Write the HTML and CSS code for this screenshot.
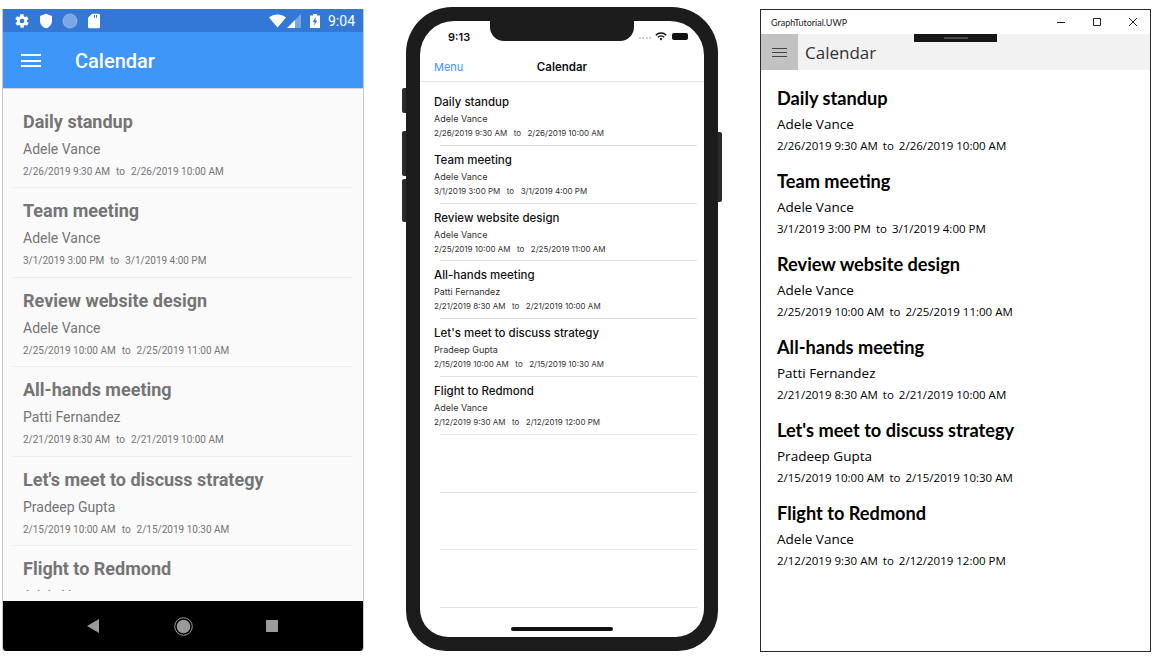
FILE: index.html
```html
<!DOCTYPE html>
<html lang="en">
<head>
    <meta charset="UTF-8">
    <meta name="viewport" content="width=device-width, initial-scale=1.0">
    <title>Calendar</title>
    <link rel="stylesheet" href="styles.css">
</head>
<body>
    <div class="stage">
        <!-- android -->
        <div class="android">
            <div class="a-status">
                <svg class="a-ico" width="16" height="16" viewBox="0 0 24 24"><path fill="#fff" d="M19.4 13c0-.3.1-.6.1-1s0-.7-.1-1l2.100-1.600c.2-.2.2-.4.1-.6l-2-3.500c-.1-.2-.4-.3-.6-.2l-2.500 1c-.5-.4-1.100-.7-1.700-1l-.4-2.700c0-.2-.2-.4-.5-.4h-4c-.3 0-.5.2-.5.400l-.4 2.700c-.6.3-1.200.6-1.700 1l-2.500-1c-.2-.1-.5 0-.6.2l-2 3.500c-.1.200-.1.500.1.600L4.600 11c0 .3-.1.700-.1 1s0 .7.1 1l-2.100 1.600c-.2.200-.2.400-.1.600l2 3.500c.1.200.4.300.6.200l2.500-1c.5.400 1.100.7 1.700 1l.4 2.700c0 .2.2.4.5.4h4c.3 0 .5-.2.5-.4l.4-2.700c.6-.3 1.200-.6 1.700-1l2.500 1c.2.100.5 0 .6-.2l2-3.500c.1-.2.1-.5-.1-.6zM12 15.500a3.500 3.500 0 1 1 0-7 3.500 3.500 0 0 1 0 7z"/></svg>
                <svg class="a-ico" width="16" height="16" viewBox="0 0 24 24"><path fill="#fff" d="M12 1 3 4.500v7c0 5.500 3.800 9.800 9 11.500 5.200-1.700 9-6 9-11.500v-7z"/></svg>
                <svg class="a-ico" width="16" height="16" viewBox="0 0 24 24"><circle cx="12" cy="12" r="10.500" fill="#7ba6e6" stroke="#a9c6ef" stroke-width="1"/></svg>
                <svg class="a-ico" width="16" height="16" viewBox="0 0 24 24"><path fill="#fff" d="M9 1h10a2 2 0 0 1 2 2v18a2 2 0 0 1-2 2H5a2 2 0 0 1-2-2V7zM12 3v4h1.500V3zm3 0v4h1.500V3z"/></svg>
                <span class="spacer"></span>
                <svg width="17" height="14" viewBox="0 0 17 14"><path fill="#fff" d="M0 3.500C2.300 1.500 5.200.5 8.500.5s6.200 1 8.500 3l-8.500 10z"/></svg>
                <svg class="a-signal" width="14" height="14" viewBox="0 0 14 14"><path fill="#7ba6e6" d="M14 0v14H8V6z"/><path fill="#fff" d="M8 6v8H0z"/></svg>
                <svg class="a-batt" width="10" height="14" viewBox="0 0 10 14"><path fill="#fff" d="M3 0h4v1.500h3V14H0V1.500h3z"/><path fill="#3278d4" d="M5.800 3 2.800 8h1.800l-.4 3.500 3-5H5.400z"/></svg>
                <span class="a-time">9:04</span>
            </div>
            <div class="a-bar">
                <div class="a-burger"><i></i><i></i><i></i></div>
                <span class="a-title">Calendar</span>
            </div>
            <div class="a-list">
                <div class="a-item">
                    <div class="a-subject">Daily standup</div>
                    <div class="a-name">Adele Vance</div>
                    <div class="a-date"><span>2/26/2019 9:30 AM</span><span>to</span><span>2/26/2019 10:00 AM</span></div>
                </div>
                <div class="a-item">
                    <div class="a-subject">Team meeting</div>
                    <div class="a-name">Adele Vance</div>
                    <div class="a-date"><span>3/1/2019 3:00 PM</span><span>to</span><span>3/1/2019 4:00 PM</span></div>
                </div>
                <div class="a-item">
                    <div class="a-subject">Review website design</div>
                    <div class="a-name">Adele Vance</div>
                    <div class="a-date"><span>2/25/2019 10:00 AM</span><span>to</span><span>2/25/2019 11:00 AM</span></div>
                </div>
                <div class="a-item">
                    <div class="a-subject">All-hands meeting</div>
                    <div class="a-name">Patti Fernandez</div>
                    <div class="a-date"><span>2/21/2019 8:30 AM</span><span>to</span><span>2/21/2019 10:00 AM</span></div>
                </div>
                <div class="a-item">
                    <div class="a-subject">Let's meet to discuss strategy</div>
                    <div class="a-name">Pradeep Gupta</div>
                    <div class="a-date"><span>2/15/2019 10:00 AM</span><span>to</span><span>2/15/2019 10:30 AM</span></div>
                </div>
                <div class="a-item">
                    <div class="a-subject">Flight to Redmond</div>
                    <div class="a-name a-name-cut">Adele Vance</div>
                </div>
            </div>
            <div class="a-nav">
                <svg width="12" height="14" viewBox="0 0 12 14"><path fill="#9a9a9a" d="M12 0v14L0 7z"/></svg>
                <svg width="19" height="19" viewBox="0 0 19 19"><circle cx="9.500" cy="9.500" r="8.800" fill="none" stroke="#9a9a9a" stroke-width="1"/><circle cx="9.500" cy="9.500" r="6.800" fill="#9a9a9a"/></svg>
                <div class="a-square"></div>
            </div>
        </div>

        <!-- iphone -->
        <div class="iphone">
            <div class="side side-mute"></div>
            <div class="side side-up"></div>
            <div class="side side-down"></div>
            <div class="side side-power"></div>
            <div class="i-screen">
                <div class="notch"></div>
                <div class="i-status">
                    <span class="i-time">9:13</span>
                    <span class="spacer"></span>
                    <span class="i-dots"><i></i><i></i><i></i><i></i></span>
                    <svg width="12" height="9" viewBox="0 0 12 9"><path fill="none" stroke="#111" stroke-width="1.500" d="M.8 3.200a7.500 7.500 0 0 1 10.400 0M2.800 5.200a4.600 4.600 0 0 1 6.400 0"/><path fill="#111" d="M4.500 6.800a2.200 2.200 0 0 1 3 0L6 8.600z"/></svg>
                    <div class="i-batt"></div>
                </div>
                <div class="i-nav">
                    <span class="i-menu">Menu</span>
                    <span class="i-navtitle">Calendar</span>
                </div>
                <div class="i-list">
                    <div class="i-item">
                        <div class="i-subject">Daily standup</div>
                        <div class="i-name">Adele Vance</div>
                        <div class="i-date"><span>2/26/2019 9:30 AM</span><span>to</span><span>2/26/2019 10:00 AM</span></div>
                    </div>
                    <div class="i-item">
                        <div class="i-subject">Team meeting</div>
                        <div class="i-name">Adele Vance</div>
                        <div class="i-date"><span>3/1/2019 3:00 PM</span><span>to</span><span>3/1/2019 4:00 PM</span></div>
                    </div>
                    <div class="i-item">
                        <div class="i-subject">Review website design</div>
                        <div class="i-name">Adele Vance</div>
                        <div class="i-date"><span>2/25/2019 10:00 AM</span><span>to</span><span>2/25/2019 11:00 AM</span></div>
                    </div>
                    <div class="i-item">
                        <div class="i-subject">All-hands meeting</div>
                        <div class="i-name">Patti Fernandez</div>
                        <div class="i-date"><span>2/21/2019 8:30 AM</span><span>to</span><span>2/21/2019 10:00 AM</span></div>
                    </div>
                    <div class="i-item">
                        <div class="i-subject">Let's meet to discuss strategy</div>
                        <div class="i-name">Pradeep Gupta</div>
                        <div class="i-date"><span>2/15/2019 10:00 AM</span><span>to</span><span>2/15/2019 10:30 AM</span></div>
                    </div>
                    <div class="i-item">
                        <div class="i-subject">Flight to Redmond</div>
                        <div class="i-name">Adele Vance</div>
                        <div class="i-date"><span>2/12/2019 9:30 AM</span><span>to</span><span>2/12/2019 12:00 PM</span></div>
                    </div>
                    <div class="i-item"></div>
                    <div class="i-item"></div>
                    <div class="i-item"></div>
                </div>
                <div class="home-bar"></div>
            </div>
        </div>

        <!-- windows -->
        <div class="uwp">
            <div class="w-title">
                <span class="w-app">GraphTutorial.UWP</span>
                <span class="spacer"></span>
                <svg class="w-ctl" width="10" height="10" viewBox="0 0 10 10"><path stroke="#222" d="M1 5.500h8"/></svg>
                <svg class="w-ctl" width="10" height="10" viewBox="0 0 10 10"><path fill="none" stroke="#222" d="M1.500 1.500h7v7h-7z"/></svg>
                <svg class="w-ctl" width="10" height="10" viewBox="0 0 10 10"><path fill="none" stroke="#222" d="m1 1 8 8M9 1l-8 8"/></svg>
            </div>
            <div class="w-bar">
                <div class="w-burger"><div class="w-lines"><i></i><i></i><i></i></div></div>
                <span class="w-heading">Calendar</span>
                <div class="debug"><i></i></div>
            </div>
            <div class="w-list">
                <div class="w-item">
                    <div class="w-subject">Daily standup</div>
                    <div class="w-name">Adele Vance</div>
                    <div class="w-date"><span>2/26/2019 9:30 AM</span><span>to</span><span>2/26/2019 10:00 AM</span></div>
                </div>
                <div class="w-item">
                    <div class="w-subject">Team meeting</div>
                    <div class="w-name">Adele Vance</div>
                    <div class="w-date"><span>3/1/2019 3:00 PM</span><span>to</span><span>3/1/2019 4:00 PM</span></div>
                </div>
                <div class="w-item">
                    <div class="w-subject">Review website design</div>
                    <div class="w-name">Adele Vance</div>
                    <div class="w-date"><span>2/25/2019 10:00 AM</span><span>to</span><span>2/25/2019 11:00 AM</span></div>
                </div>
                <div class="w-item">
                    <div class="w-subject">All-hands meeting</div>
                    <div class="w-name">Patti Fernandez</div>
                    <div class="w-date"><span>2/21/2019 8:30 AM</span><span>to</span><span>2/21/2019 10:00 AM</span></div>
                </div>
                <div class="w-item">
                    <div class="w-subject">Let's meet to discuss strategy</div>
                    <div class="w-name">Pradeep Gupta</div>
                    <div class="w-date"><span>2/15/2019 10:00 AM</span><span>to</span><span>2/15/2019 10:30 AM</span></div>
                </div>
                <div class="w-item">
                    <div class="w-subject">Flight to Redmond</div>
                    <div class="w-name">Adele Vance</div>
                    <div class="w-date"><span>2/12/2019 9:30 AM</span><span>to</span><span>2/12/2019 12:00 PM</span></div>
                </div>
            </div>
        </div>
    </div>
</body>
</html>
```

FILE: styles.css
```css
html, body {
    margin: 0;
    padding: 0;
    background-color: white;
    overflow: hidden;
}
.stage {
    display: flex;
    align-items: flex-start;
    width: 1155px;
    height: 660px;
    box-sizing: border-box;
    padding: 7px 0 0 2px;
}
.spacer {
    flex: 1;
}

/* android */
.android {
    width: 362px;
    height: 642px;
    margin-top: 2px;
    flex: none;
    display: flex;
    flex-direction: column;
    box-sizing: border-box;
    border-left: 1px solid #c8c8c8;
    border-right: 1px solid #c8c8c8;
    border-radius: 0 0 4px 4px;
    overflow: hidden;
    background-color: #fafafa;
    font-family: Roboto, sans-serif;
}
.a-status {
    height: 23px;
    flex: none;
    display: flex;
    align-items: center;
    padding: 1px 8px 0 11px;
    box-sizing: border-box;
    background-color: #3278d4;
    color: white;
}
.a-ico {
    margin-right: 8px;
}
.a-signal {
    margin-left: 1px;
}
.a-batt {
    margin-left: 9px;
}
.a-time {
    margin-left: 8px;
    font-size: 14px;
}
.a-bar {
    height: 57px;
    flex: none;
    display: flex;
    align-items: center;
    padding-top: 1px;
    background-color: #3e96f8;
    border-bottom: 1px solid #d4d4d4;
    box-sizing: border-box;
    color: white;
}
.a-burger {
    width: 20px;
    margin-left: 18px;
    margin-right: 34px;
}
.a-burger i {
    display: block;
    height: 2px;
    margin: 3.500px 0;
    background-color: white;
}
.a-title {
    font-size: 20px;
    font-weight: 500;
}
.a-list {
    flex: 1;
    min-height: 0;
    overflow: hidden;
    padding: 10px 10px 0 10px;
}
.a-item {
    height: 89.400px;
    box-sizing: border-box;
    padding: 11px 0 0 10px;
    border-bottom: 1px solid #ececec;
    color: #757575;
}
.a-subject {
    font-size: 18px;
    line-height: 24px;
    font-weight: 700;
}
.a-name {
    margin-top: 5px;
    font-size: 14px;
    line-height: 20px;
}
.a-name-cut {
    height: 5px;
    overflow: hidden;
}
.a-date {
    margin-top: 5px;
    font-size: 10px;
    line-height: 15px;
}
.a-date span + span {
    margin-left: 6px;
}
.a-nav {
    height: 50px;
    flex: none;
    display: flex;
    align-items: center;
    padding-left: 84px;
    gap: 74.500px;
    background-color: black;
}
.a-square {
    width: 12px;
    height: 12px;
    margin-left: -1px;
    background-color: #9a9a9a;
}

/* iphone */
.iphone {
    position: relative;
    width: 312px;
    height: 644px;
    margin-left: 42px;
    flex: none;
    box-sizing: border-box;
    padding: 14px;
    background-color: #1c1c1c;
    border-radius: 46px 46px 40px 40px;
    font-family: Inter, sans-serif;
}
.side {
    position: absolute;
    width: 4px;
    background-color: #2a2a2a;
}
.side-mute {
    left: -4px;
    top: 81px;
    height: 25px;
    border-radius: 2px 0 0 2px;
}
.side-up {
    left: -4px;
    top: 124px;
    height: 45px;
    border-radius: 2px 0 0 2px;
}
.side-down {
    left: -4px;
    top: 172px;
    height: 43px;
    border-radius: 2px 0 0 2px;
}
.side-power {
    right: -4px;
    top: 125px;
    height: 70px;
    border-radius: 0 2px 2px 0;
}
.i-screen {
    position: relative;
    height: 100%;
    background-color: white;
    border-radius: 34px 34px 28px 28px;
    overflow: hidden;
}
.notch {
    position: absolute;
    left: 70px;
    top: 0;
    width: 144px;
    height: 20px;
    background-color: #1c1c1c;
    border-radius: 0 0 14px 14px;
}
.i-status {
    height: 30px;
    display: flex;
    align-items: center;
    padding: 1px 16px 0 28px;
    box-sizing: border-box;
}
.i-time {
    font-size: 11px;
    font-weight: 600;
    color: #111;
}
.i-dots {
    display: flex;
    gap: 1.500px;
    margin-right: 4px;
    margin-top: 2px;
}
.i-dots i {
    width: 2px;
    height: 2px;
    border-radius: 50%;
    background-color: #c4c4c4;
}
.i-batt {
    width: 16px;
    height: 7px;
    margin-left: 5px;
    background-color: #111;
    border-radius: 2px;
}
.i-nav {
    position: relative;
    height: 31px;
    display: flex;
    align-items: center;
    justify-content: center;
    padding-top: 1px;
    box-sizing: border-box;
    border-bottom: 1px solid #e6e6e6;
}
.i-menu {
    position: absolute;
    left: 14px;
    font-size: 11px;
    color: #3f93f5;
}
.i-navtitle {
    font-size: 11.500px;
    font-weight: 600;
    color: #111;
}
.i-list {
    display: flex;
    flex-direction: column;
    padding-top: 6px;
}
.i-item {
    height: 57.800px;
    flex: none;
    box-sizing: border-box;
    padding: 6px 0 0 14px;
    position: relative;
    color: #111;
}
.i-item::after {
    content: "";
    position: absolute;
    left: 20px;
    right: 7px;
    bottom: 0;
    height: 1px;
    background-color: #e2e2e2;
}
.i-subject {
    font-size: 11.500px;
    line-height: 16px;
    font-weight: 500;
}
.i-name {
    margin-top: 2px;
    font-size: 9px;
    line-height: 13px;
    color: #333;
}
.i-date {
    margin-top: 2px;
    font-size: 8px;
    line-height: 12px;
    color: #333;
}
.i-date span + span {
    margin-left: 6.500px;
}
.home-bar {
    position: absolute;
    left: 91px;
    bottom: 6px;
    width: 102px;
    height: 4px;
    background-color: #111;
    border-radius: 2px;
}

/* windows */
.uwp {
    width: 391px;
    height: 643px;
    margin-top: 2px;
    margin-left: 42px;
    flex: none;
    box-sizing: border-box;
    border: 1px solid #2a2a2a;
    background-color: white;
    font-family: "Open Sans", sans-serif;
    color: black;
}
.w-title {
    height: 24px;
    display: flex;
    align-items: center;
    padding: 0 12px 0 10px;
}
.w-app {
    font-family: Lato, sans-serif;
    font-size: 9px;
    color: #222;
}
.w-ctl {
    margin-left: 26px;
}
.w-bar {
    position: relative;
    height: 36px;
    display: flex;
    align-items: center;
    background-color: #f2f2f2;
}
.w-burger {
    width: 37px;
    height: 36px;
    display: flex;
    align-items: center;
    justify-content: center;
    background-color: #c2c2c2;
}
.w-lines {
    width: 15px;
}
.w-lines i {
    display: block;
    height: 1px;
    margin: 3px 0;
    background-color: #444;
}
.w-heading {
    margin-left: 7px;
    padding-top: 1px;
    font-size: 17px;
    color: #333;
}
.debug {
    position: absolute;
    left: 153px;
    top: 0;
    width: 83px;
    height: 8px;
    display: flex;
    justify-content: center;
    background-color: #161616;
}
.debug i {
    width: 24px;
    height: 2px;
    margin-top: 3px;
    background-color: #4a4a4a;
}
.w-list {
    padding: 16px 0 0 16px;
}
.w-item {
    height: 83px;
}
.w-subject {
    font-family: Lato, sans-serif;
    font-size: 18.200px;
    line-height: 25px;
    font-weight: 700;
}
.w-name {
    margin-top: 1px;
    font-size: 13.500px;
    line-height: 25px;
}
.w-date {
    margin-top: -1px;
    font-size: 11.500px;
    line-height: 19px;
}
.w-date span + span {
    margin-left: 5px;
}
```
